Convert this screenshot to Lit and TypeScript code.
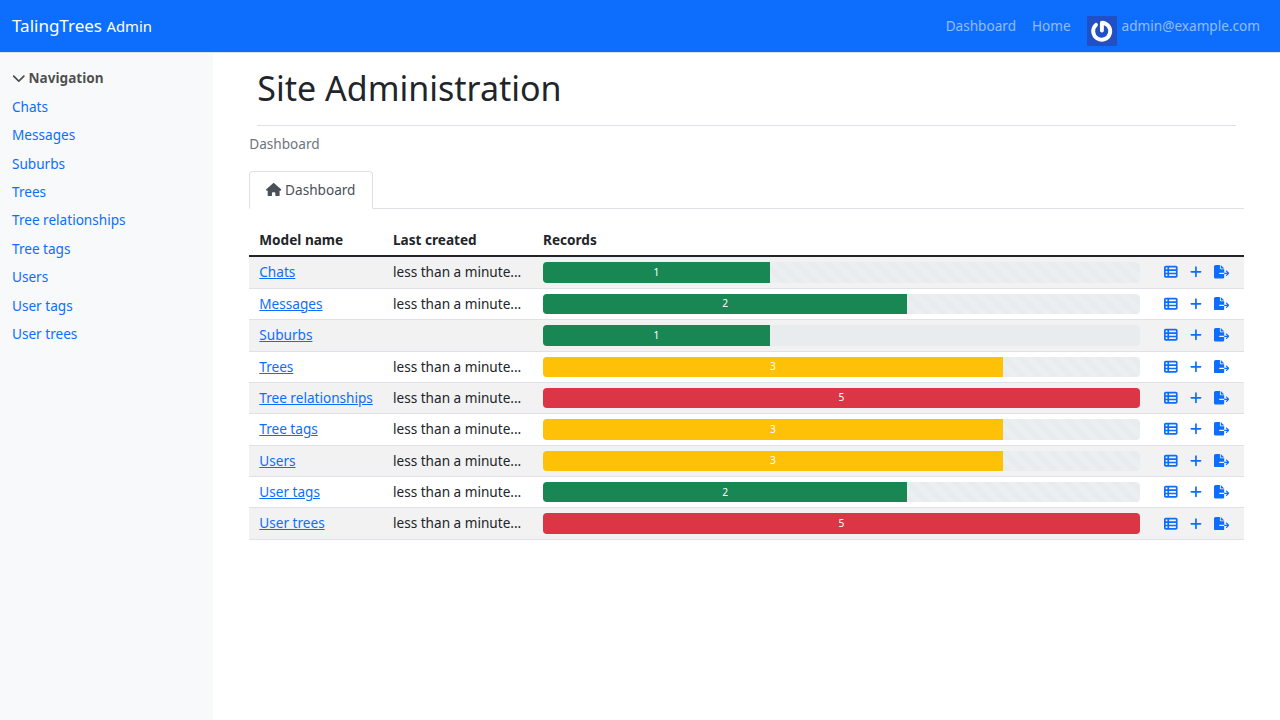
import { LitElement, html, css, svg } from "lit";
import { customElement } from "lit/decorators.js";

const ICONS = {
  chevron: [512, "M233.4 406.6c12.5 12.5 32.8 12.5 45.3 0l192-192c12.5-12.5 12.5-32.8 0-45.3s-32.8-12.5-45.3 0L256 338.7 86.6 169.4c-12.5-12.5-32.8-12.5-45.3 0s-12.5 32.8 0 45.3l192 192z"],
  home: [576, "M575.8 255.5c0 18-15 32.1-32 32.1h-32l.7 160.2c0 2.7-.2 5.4-.5 8.1V472c0 22.1-17.9 40-40 40H456c-1.1 0-2.2 0-3.3-.1c-1.4 .1-2.8 .1-4.2 .1H416 392c-22.1 0-40-17.9-40-40V448 384c0-17.7-14.3-32-32-32H256c-17.7 0-32 14.3-32 32v64 24c0 22.1-17.9 40-40 40H160 128.1c-1.5 0-3-.1-4.5-.2c-1.2 .1-2.4 .2-3.6 .2H104c-22.1 0-40-17.9-40-40V360c0-.9 0-1.9 .1-2.8V287.6H32c-18 0-32-14-32-32.1c0-9 3-17 10-24L266.4 8c7-7 15-8 22-8s15 2 21 7L564.8 231.5c8 7 12 15 11 24z"],
  list: [512, "M0 96C0 60.7 28.7 32 64 32H448c35.3 0 64 28.7 64 64V416c0 35.3-28.7 64-64 64H64c-35.3 0-64-28.7-64-64V96zm64 0v64h64V96H64zm384 0H192v64H448V96zM64 224v64h64V224H64zm384 0H192v64H448V224zM64 352v64h64V352H64zm384 0H192v64H448V352z"],
  plus: [448, "M256 80c0-17.7-14.3-32-32-32s-32 14.3-32 32V224H48c-17.7 0-32 14.3-32 32s14.3 32 32 32H192V432c0 17.7 14.3 32 32 32s32-14.3 32-32V288H400c17.7 0 32-14.3 32-32s-14.3-32-32-32H256V80z"],
  fileExport: [576, "M0 64C0 28.7 28.7 0 64 0H224V128c0 17.7 14.3 32 32 32H384V288H216c-13.3 0-24 10.7-24 24s10.7 24 24 24H384V448c0 35.3-28.7 64-64 64H64c-35.3 0-64-28.7-64-64V64zM384 336V288H494.1l-39-39c-9.4-9.4-9.4-24.6 0-33.9s24.6-9.4 33.9 0l80 80c9.4 9.4 9.4 24.6 0 33.9l-80 80c-9.4 9.4-24.6 9.4-33.9 0s-9.4-24.6 0-33.9l39-39H384zm0-208H256V0L384 128z"],
} as const;

const icon = (name: keyof typeof ICONS) => {
  const [w, d] = ICONS[name];
  return html`<svg class="icon icon-${name}" viewBox="0 0 ${w} 512">${svg`<path d=${d}></path>`}</svg>`;
};

interface Model {
  name: string;
  created: string;
  count: number;
  percent: number;
  level: "success" | "warning" | "danger";
}

const RECENT = "less than a minute...";

const MODELS: Model[] = [
  { name: "Chats", created: RECENT, count: 1, percent: 38, level: "success" },
  { name: "Messages", created: RECENT, count: 2, percent: 61, level: "success" },
  { name: "Suburbs", created: "", count: 1, percent: 38, level: "success" },
  { name: "Trees", created: RECENT, count: 3, percent: 77, level: "warning" },
  { name: "Tree relationships", created: RECENT, count: 5, percent: 100, level: "danger" },
  { name: "Tree tags", created: RECENT, count: 3, percent: 77, level: "warning" },
  { name: "Users", created: RECENT, count: 3, percent: 77, level: "warning" },
  { name: "User tags", created: RECENT, count: 2, percent: 61, level: "success" },
  { name: "User trees", created: RECENT, count: 5, percent: 100, level: "danger" },
];

@customElement("app-root")
export class AppRoot extends LitElement {
  static styles = css`
    :host {
      display: flex;
      flex-direction: column;
      height: 720px;
      overflow: hidden;
      background: #fff;
      color: #212529;
      font: 13.6px/1.5 "Noto Sans", "Liberation Sans", sans-serif;
    }
    * { box-sizing: border-box; }
    a { color: #0d6efd; text-decoration: none; }
    .icon { height: 1em; fill: currentColor; vertical-align: -0.125em; }

    .navbar {
      flex: none;
      height: 53px;
      display: flex;
      align-items: center;
      justify-content: space-between;
      padding: 0 12px;
      background: #0d6efd;
      border-bottom: 1px solid #dee2e6;
    }
    .brand { color: #fff; font-size: 17px; }
    .brand small { font-size: 0.875em; }
    .links { display: flex; }
    .links a { display: block; padding: 8px; color: rgba(255, 255, 255, 0.55); height: 36.4px; white-space: nowrap; }
    .links .user { display: flex; gap: 4.9px; }
    .user svg { flex: none; width: 30px; height: 30px; }

    .body { flex: 1; display: flex; min-height: 0; }
    .sidebar { flex: none; width: 212.6px; background: #f8f9fa; padding: 10.8px 12px; }
    .toggle { padding: 4px 0; height: 29px; font-weight: 700; color: rgba(0, 0, 0, 0.7); white-space: nowrap; }
    .toggle .icon { margin-right: -0.6px; }
    .sidebar nav { display: flex; flex-direction: column; }
    .sidebar nav a { padding: 4px 0; }

    .main { flex: 1; padding: 15.4px 36px 0 36.7px; }
    .heading { margin: 0 8px; padding-bottom: 16px; border-bottom: 1px solid #dee2e6; }
    h1 { margin: 0; font-size: 34px; font-weight: 400; line-height: 1.2; height: 41px; }
    .crumb { color: #6c757d; margin-top: 8px; }
    .tabs { display: flex; margin-top: 16px; border-bottom: 1px solid #dee2e6; }
    .tab {
      margin-bottom: -1px;
      height: 38.4px;
      padding: 8px 16.6px 8px 16px;
      border: 1px solid #dee2e6;
      border-bottom-color: #fff;
      border-radius: 4px 4px 0 0;
      background: #fff;
      color: #495057;
      white-space: nowrap;
    }
    table { width: 100%; border-collapse: separate; border-spacing: 0; table-layout: fixed; margin-top: 15.8px; }
    th, td { padding: 5px 10px; text-align: left; vertical-align: top; white-space: nowrap; height: 31.4px; border-bottom: 1px solid #dee2e6; }
    th { height: 32.4px; border-bottom: 2px solid #212529; font-weight: 700; }
    tbody tr:nth-child(odd) td { background: #f2f2f2; }
    td a { text-decoration: underline; }
    .c-name { width: 133.7px; }
    .c-created { width: 150px; }
    .c-actions { width: 94px; }
    .track {
      display: flex;
      height: 20.4px;
      border-radius: 4px;
      overflow: hidden;
      background-color: #e9ecef;
    }
    .striped {
      background-image: linear-gradient(45deg, rgba(255, 255, 255, 0.15) 25%, transparent 25%, transparent 50%, rgba(255, 255, 255, 0.15) 50%, rgba(255, 255, 255, 0.15) 75%, transparent 75%, transparent);
      background-size: 16px 16px;
    }
    .bar { display: flex; justify-content: center; align-items: center; color: #fff; font-size: 10.2px; }
    .success { background: #198754; }
    .warning { background: #ffc107; }
    .danger { background: #dc3545; }
    .actions { display: flex; gap: 12.1px; padding-left: 4.4px; }
    .actions a { display: block; }
  `;

  render() {
    return html`
      <header class="navbar">
        <a class="brand">TalingTrees <small>Admin</small></a>
        <div class="links">
          <a>Dashboard</a>
          <a>Home</a>
          <a class="user">
            <svg viewBox="0 0 30 30">
              <rect width="30" height="30" fill="#214fc6"></rect>
              <path d="M14.9 14.6V6.7A8.5 8.5 0 1 1 9 8.9" fill="none" stroke="#fff" stroke-width="3.9" stroke-linecap="round" stroke-linejoin="round"></path>
            </svg>
            <span>admin@example.com</span>
          </a>
        </div>
      </header>
      <div class="body">
        <aside class="sidebar">
          <div class="toggle">${icon("chevron")} Navigation</div>
          <nav>${MODELS.map((m) => html`<a>${m.name}</a>`)}</nav>
        </aside>
        <main class="main">
          <div class="heading"><h1>Site Administration</h1></div>
          <div class="crumb">Dashboard</div>
          <div class="tabs"><a class="tab">${icon("home")} Dashboard</a></div>
          <table>
            <colgroup><col class="c-name" /><col class="c-created" /><col /><col class="c-actions" /></colgroup>
            <thead><tr><th>Model name</th><th>Last created</th><th>Records</th><th></th></tr></thead>
            <tbody>
              ${MODELS.map(
                (m) => html`<tr>
                  <td><a>${m.name}</a></td>
                  <td>${m.created}</td>
                  <td>
                    <div class="track ${m.created ? "striped" : ""}">
                      <div class="bar ${m.level}" style="width:${m.percent}%">${m.count}</div>
                    </div>
                  </td>
                  <td><div class="actions"><a>${icon("list")}</a><a>${icon("plus")}</a><a>${icon("fileExport")}</a></div></td>
                </tr>`
              )}
            </tbody>
          </table>
        </main>
      </div>
    `;
  }
}
